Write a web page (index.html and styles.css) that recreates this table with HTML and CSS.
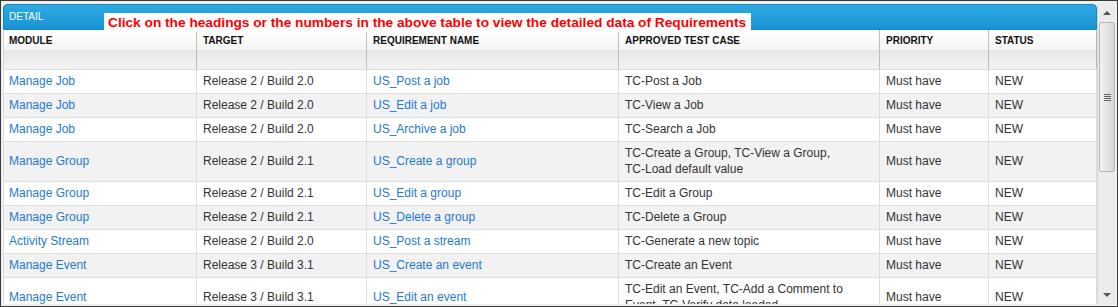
FILE: index.html
```html
<!DOCTYPE html>
<html>
<head>
<meta charset="utf-8">
<link rel="stylesheet" href="styles.css">
</head>
<body>
<div class="frame">
  <div class="viewport">
    <div class="panel">
      <div class="panel-head">DETAIL</div>
      <div class="notice">Click on the headings or the numbers in the above table to view the detailed data of Requirements</div>
      <table class="grid">
        <colgroup>
          <col class="c1"><col class="c2"><col class="c3"><col class="c4"><col class="c5"><col class="c6">
        </colgroup>
        <thead>
          <tr class="titles">
            <th>MODULE</th><th>TARGET</th><th>REQUIREMENT NAME</th><th>APPROVED TEST CASE</th><th>PRIORITY</th><th>STATUS</th>
          </tr>
          <tr class="filters">
            <th></th><th></th><th></th><th></th><th></th><th></th>
          </tr>
        </thead>
        <tbody>
          <tr><td><a>Manage Job</a></td><td>Release 2 / Build 2.0</td><td><a>US_Post a job</a></td><td>TC-Post a Job</td><td>Must have</td><td>NEW</td></tr>
          <tr><td><a>Manage Job</a></td><td>Release 2 / Build 2.0</td><td><a>US_Edit a job</a></td><td>TC-View a Job</td><td>Must have</td><td>NEW</td></tr>
          <tr><td><a>Manage Job</a></td><td>Release 2 / Build 2.0</td><td><a>US_Archive a job</a></td><td>TC-Search a Job</td><td>Must have</td><td>NEW</td></tr>
          <tr><td><a>Manage Group</a></td><td>Release 2 / Build 2.1</td><td><a>US_Create a group</a></td><td>TC-Create a Group, TC-View a Group,<br>TC-Load default value</td><td>Must have</td><td>NEW</td></tr>
          <tr><td><a>Manage Group</a></td><td>Release 2 / Build 2.1</td><td><a>US_Edit a group</a></td><td>TC-Edit a Group</td><td>Must have</td><td>NEW</td></tr>
          <tr><td><a>Manage Group</a></td><td>Release 2 / Build 2.1</td><td><a>US_Delete a group</a></td><td>TC-Delete a Group</td><td>Must have</td><td>NEW</td></tr>
          <tr><td><a>Activity Stream</a></td><td>Release 2 / Build 2.0</td><td><a>US_Post a stream</a></td><td>TC-Generate a new topic</td><td>Must have</td><td>NEW</td></tr>
          <tr><td><a>Manage Event</a></td><td>Release 3 / Build 3.1</td><td><a>US_Create an event</a></td><td>TC-Create an Event</td><td>Must have</td><td>NEW</td></tr>
          <tr><td><a>Manage Event</a></td><td>Release 3 / Build 3.1</td><td><a>US_Edit an event</a></td><td>TC-Edit an Event, TC-Add a Comment to<br>Event, TC-Verify data loaded</td><td>Must have</td><td>NEW</td></tr>
        </tbody>
      </table>
    </div>
    <div class="scrollbar">
      <div class="arrow up"></div>
      <div class="track">
        <div class="thumb"><span class="grip"></span></div>
      </div>
      <div class="arrow down"></div>
    </div>
  </div>
</div>
</body>
</html>
```

FILE: styles.css
```css
html, body {
  margin: 0;
  padding: 0;
  background: #f0f0f0;
}
.frame {
  position: relative;
  width: 1118px;
  height: 307px;
  box-sizing: border-box;
  border: 1px solid #3a3a3a;
  padding: 3px 2px 2px 2px;
  background: #f0f0f0;
  overflow: hidden;
}
.viewport {
  display: flex;
  height: 300px;
  background: #fff;
  overflow: hidden;
}
.panel {
  width: 1094px;
  flex: none;
  overflow: hidden;
  background: #fff;
  font-family: "Liberation Sans", Arial, sans-serif;
}
.panel-head {
  height: 26px;
  box-sizing: border-box;
  border: 1px solid #1786c4;
  border-radius: 4px 4px 0 0;
  background: linear-gradient(#2eaae3, #1a93d3);
  color: #fff;
  font-size: 10px;
  line-height: 24px;
  padding-left: 5px;
}
.notice {
  position: absolute;
  left: 103px;
  top: 12px;
  height: 19px;
  padding: 0 5px 0 4px;
  background: #fff;
  color: #f00;
  font-family: "Liberation Sans", Arial, sans-serif;
  font-weight: bold;
  font-size: 13.7px;
  line-height: 20px;
  white-space: nowrap;
}
.grid {
  border-collapse: collapse;
  table-layout: fixed;
  width: 1093px;
  font-size: 12px;
  color: #333;
}
.c1 { width: 193px; }
.c2 { width: 170px; }
.c3 { width: 252px; }
.c4 { width: 261px; }
.c5 { width: 109px; }
.c6 { width: 108px; }
.grid th {
  text-align: left;
  font-weight: bold;
  font-size: 10px;
  color: #111;
  padding: 0 6px;
  border-left: 1px solid #bdbdbd;
  border-right: 1px solid #bdbdbd;
}
.grid th:first-child { border-left: 1px solid #d8d8d8; padding-left: 5px; }
.grid .titles th {
  height: 19px;
  line-height: 19px;
  background: linear-gradient(#ffffff, #f4f4f4);
  padding-top: 1px;
}
.grid .filters th {
  height: 19px;
  background: linear-gradient(#e6e6e6, #f3f3f3);
  border-bottom: 1px solid #dcdcdc;
}
.grid td {
  padding: 3px 6px 4px 6px;
  line-height: 16px;
  border: 1px solid #dedede;
  vertical-align: middle;
  white-space: nowrap;
  overflow: hidden;
}
.grid td:first-child { padding-left: 5px; }
.grid tbody tr:nth-child(even) td { background: #f2f2f2; }
.grid a {
  color: #1f7acb;
  text-decoration: none;
}
.scrollbar {
  width: 19px;
  flex: none;
  display: flex;
  flex-direction: column;
  background: #ececec;
  border-left: 1px solid #d4d4d4;
  box-sizing: border-box;
}
.arrow {
  height: 17px;
  flex: none;
  position: relative;
}
.arrow::after {
  content: "";
  position: absolute;
  left: 5px;
  border-left: 4px solid transparent;
  border-right: 4px solid transparent;
}
.arrow.up::after {
  top: 7px;
  border-bottom: 4px solid #555;
}
.arrow.down::after {
  top: 6px;
  border-top: 4px solid #555;
}
.track {
  flex: 1;
  padding: 0 1px;
}
.thumb {
  height: 150px;
  margin-top: 1px;
  box-sizing: border-box;
  border: 1px solid #b4b4b4;
  border-radius: 2px;
  background: linear-gradient(90deg, #f2f2f2, #e2e2e2 60%, #d6d6d6);
  display: flex;
  align-items: center;
  justify-content: center;
}
.grip {
  width: 7px;
  height: 7px;
  background: repeating-linear-gradient(#666 0 1px, transparent 1px 2px);
}
```
